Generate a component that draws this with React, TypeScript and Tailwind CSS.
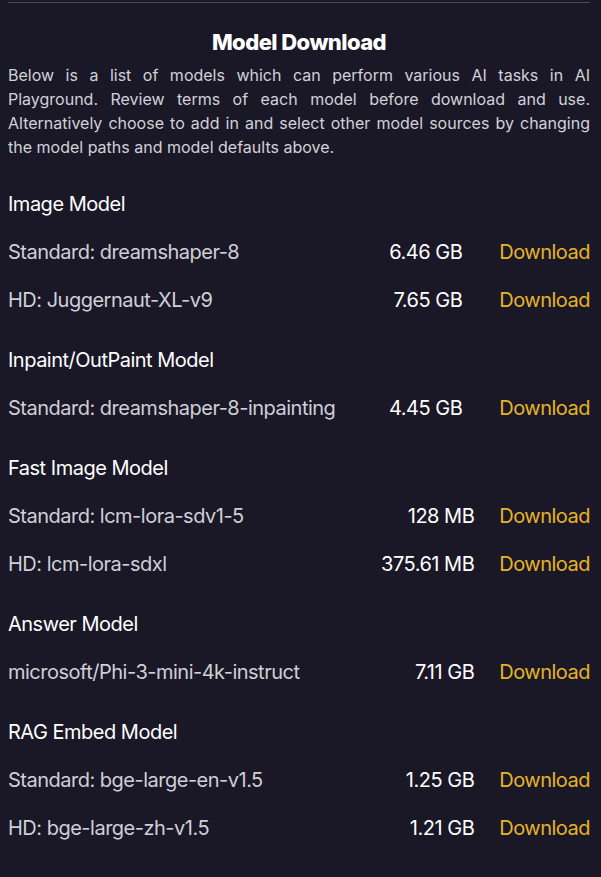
const sections = [
  {
    title: 'Image Model',
    pad: 'mr-[37px]',
    rows: [
      { name: 'Standard: dreamshaper-8', size: '6.46 GB' },
      { name: 'HD: Juggernaut-XL-v9', size: '7.65 GB' },
    ],
  },
  {
    title: 'Inpaint/OutPaint Model',
    pad: 'mr-[37px]',
    rows: [{ name: 'Standard: dreamshaper-8-inpainting', size: '4.45 GB' }],
  },
  {
    title: 'Fast Image Model',
    pad: 'mr-[25px]',
    rows: [
      { name: 'Standard: lcm-lora-sdv1-5', size: '128 MB' },
      { name: 'HD: lcm-lora-sdxl', size: '375.61 MB' },
    ],
  },
  {
    title: 'Answer Model',
    pad: 'mr-[25px]',
    rows: [{ name: 'microsoft/Phi-3-mini-4k-instruct', size: '7.11 GB' }],
  },
  {
    title: 'RAG Embed Model',
    pad: 'mr-[25px]',
    rows: [
      { name: 'Standard: bge-large-en-v1.5', size: '1.25 GB' },
      { name: 'HD: bge-large-zh-v1.5', size: '1.21 GB' },
    ],
  },
]

export default function App() {
  return (
    <div className="min-h-screen bg-[#1a1826] pl-2 pr-[11px] pt-[2px] font-['Inter',sans-serif]">
      <div className="h-px bg-[#4b4a57]" />

      <h2 className="mt-[25px] text-center text-[22px] font-extrabold leading-7 tracking-tight text-white">
        Model Download
      </h2>
      <p className="mt-[7px] text-justify text-base leading-6 text-[#d2d1da]">
        Below is a list of models which can perform various AI tasks in AI Playground. Review terms of each model
        before download and use. Alternatively choose to add in and select other model sources by changing the model
        paths and model defaults above.
      </p>

      <div className="mt-[31px] flex flex-col gap-[22px]">
        {sections.map((s) => (
          <div key={s.title}>
            <h3 className="text-xl leading-7 tracking-tight text-white">{s.title}</h3>
            <div className="mt-[10px]">
              {s.rows.map((r) => (
                <div key={r.name} className="flex h-12 items-center text-xl tracking-tight">
                  <span className="flex-1 text-[#cfcfd8]">{r.name}</span>
                  <span className={`text-right text-white ${s.pad}`}>{r.size}</span>
                  <span className="text-[#e4b425]">Download</span>
                </div>
              ))}
            </div>
          </div>
        ))}
      </div>
    </div>
  )
}
